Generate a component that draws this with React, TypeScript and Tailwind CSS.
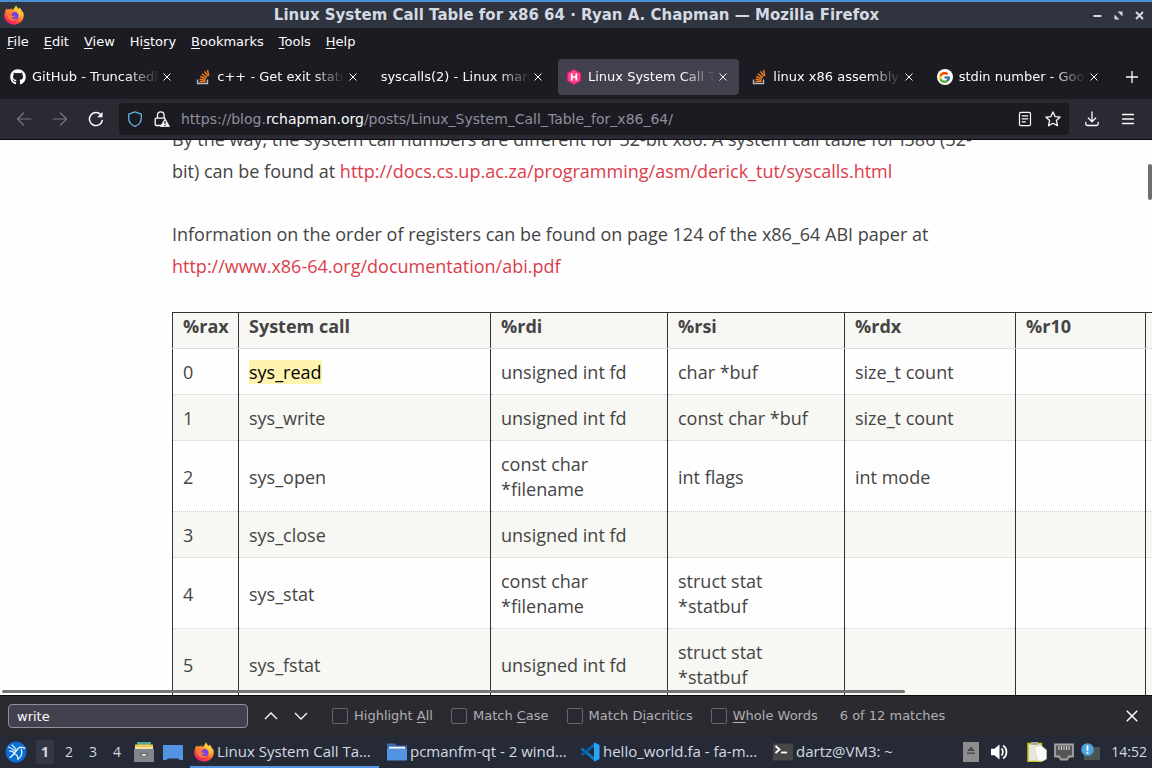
import type { ReactNode } from "react";
import { FaGithub } from "react-icons/fa";
import { FcGoogle } from "react-icons/fc";

const UI_FONT = "font-['DejaVu_Sans',sans-serif]";

function FirefoxIcon({ className }: { className: string }) {
  return (
    <svg viewBox="0 0 20 20" className={className} aria-hidden="true">
      <defs>
        <linearGradient id="ffBody" x1="0.8" y1="0" x2="0.25" y2="1">
          <stop offset="0" stopColor="#fff04a" />
          <stop offset="0.4" stopColor="#ffa52a" />
          <stop offset="0.7" stopColor="#ff4b3e" />
          <stop offset="1" stopColor="#e3127c" />
        </linearGradient>
      </defs>
      <path
        d="M12.2.3c.3 1.8 1.4 2.6 2.6 3.7.5-.2.6-.8.6-1.4 1.6 1.5 2.4 2.8 2.9 4.4.5-.1.5-.5.5-.8.9 1.9 1.1 3.800.9 5.300C19.100 16.200 15 19.700 10 19.700S.5 16 .3 11c-.1-2 .4-3.900 1.200-5.300 0-.9.3-1.800.9-2.500.1.800.3 1.200.7 1.600.9-.5 2.100-.6 3.200-.3C7 3.700 7.900 3.300 8.800 3.300c-1 .8-1.300 1.500-1.300 2 2.300-.1 3-2.800 4.700-5z"
        fill="url(#ffBody)"
      />
      <circle cx="10.300" cy="11" r="4.300" fill="#7542e5" />
      <path
        d="M3 6.200c1.600-1.200 3.400-.9 4.500.1 1.300-.1 2.300.1 3 .8-1 .2-1.800 1-2.500 1.500-.6.500-.9 1.200-.3 1.900.9.900 2.100 0 3.200.4-.6 1.700-2.600 1.900-4 1.500 1.400 1.900 4.200 2 6 .8-1.100 2.300-4.300 3.100-6.700 1.700C3.600 13.400 2.600 9.500 3 6.200z"
        fill="#ff7a35"
      />
      <path d="M12.500 5.500c2.700 1.600 3.400 4.700 2 7.500 2.500-2 2.600-5.500.6-7.600z" fill="#ffd23f" />
    </svg>
  );
}

function StackOverflowIcon() {
  return (
    <svg viewBox="0 0 16 16" className="size-4 shrink-0" fill="none" aria-hidden="true">
      <path d="M2.500 10.500v4h10v-4" stroke="#bcbbbb" strokeWidth="1.400" />
      <g stroke="#f48024" strokeWidth="1.400">
        <path d="M4.500 12.500h6" />
        <path d="m4.600 10.200 6 1.200" />
        <path d="m5.300 7.500 5.600 2.500" />
        <path d="m6.900 4.700 4.800 3.900" />
        <path d="m9.500 2.300 3.400 5" />
        <path d="m12.500 1 1.200 5.800" />
      </g>
    </svg>
  );
}

function HugoIcon() {
  return (
    <svg viewBox="0 0 16 16" className="size-4 shrink-0" aria-hidden="true">
      <path d="M8 .5 14.800 4.200v7.600L8 15.500 1.200 11.800V4.200z" fill="#ff4088" stroke="#c9177e" strokeWidth="1" strokeLinejoin="round" />
      <path d="M5.700 4.500v7M10.300 4.500v7M5.700 8h4.600" stroke="#fff" strokeWidth="1.700" fill="none" />
    </svg>
  );
}

function GoogleIcon() {
  return (
    <span className="flex size-4 shrink-0 items-center justify-center rounded-full bg-white">
      <FcGoogle className="size-[13px]" />
    </span>
  );
}

function CloseIcon({ className = "size-2" }: { className?: string }) {
  return (
    <svg viewBox="0 0 8 8" className={className} stroke="currentColor" fill="none" aria-hidden="true">
      <path d="m.5.500 7 7m0-7-7 7" />
    </svg>
  );
}

type Tab = { title: string; icon?: ReactNode; active?: boolean };

const tabs: Tab[] = [
  { title: "GitHub - Truncated[", icon: <FaGithub className="size-4 shrink-0 text-white" /> },
  { title: "c++ - Get exit status", icon: <StackOverflowIcon /> },
  { title: "syscalls(2) - Linux manual" },
  { title: "Linux System Call Table", icon: <HugoIcon />, active: true },
  { title: "linux x86 assembly -", icon: <StackOverflowIcon /> },
  { title: "stdin number - Google", icon: <GoogleIcon /> },
];

const menus = [
  ["", "F", "ile"],
  ["", "E", "dit"],
  ["", "V", "iew"],
  ["Hi", "s", "tory"],
  ["", "B", "ookmarks"],
  ["", "T", "ools"],
  ["", "H", "elp"],
];

const columns = ["%rax", "System call", "%rdi", "%rsi", "%rdx", "%r10", "%r8"];

const rows = [
  ["0", "sys_read", "unsigned int fd", "char *buf", "size_t count", "", ""],
  ["1", "sys_write", "unsigned int fd", "const char *buf", "size_t count", "", ""],
  ["2", "sys_open", "const char *filename", "int flags", "int mode", "", ""],
  ["3", "sys_close", "unsigned int fd", "", "", "", ""],
  ["4", "sys_stat", "const char *filename", "struct stat *statbuf", "", "", ""],
  ["5", "sys_fstat", "unsigned int fd", "struct stat *statbuf", "", "", ""],
];

const findOptions = [
  { id: "highlight", label: ["Highlight ", "A", "ll"] },
  { id: "case", label: ["Match ", "C", "ase"] },
  { id: "diacritics", label: ["Match D", "i", "acritics"] },
  { id: "words", label: ["", "W", "hole Words"] },
];

function Mnemonic({ parts }: { parts: string[] }) {
  return (
    <>
      {parts[0]}
      <span className="underline underline-offset-2">{parts[1]}</span>
      {parts[2]}
    </>
  );
}

function TitleBar() {
  return (
    <header className="flex h-7 shrink-0 items-center border-t-2 border-[#4a90d9] bg-[#2f343f] px-1">
      <FirefoxIcon className="size-5" />
      <h1 className="flex-1 pl-9 text-center text-[15px] font-bold text-[#d3dae3]">
        Linux System Call Table for x86 64 · Ryan A. Chapman — Mozilla Firefox
      </h1>
      <div className="flex gap-3 pr-1 text-[#d3dae3]">
        <button aria-label="Minimize">
          <svg viewBox="0 0 9 9" className="size-[9px]"><path d="M.5 4h8v2h-8z" fill="currentColor" /></svg>
        </button>
        <button aria-label="Restore">
          <svg viewBox="0 0 9 9" className="size-[9px]"><path d="M3.500.500h5v5zM.5 3.500l5 5h-5z" fill="currentColor" /></svg>
        </button>
        <button aria-label="Close window">
          <svg viewBox="0 0 9 9" className="size-[9px]"><path d="m1 1 7 7m0-7-7 7" stroke="currentColor" strokeWidth="2" /></svg>
        </button>
      </div>
    </header>
  );
}

function TabStrip() {
  return (
    <div className="flex h-11 shrink-0 items-center text-[#fbfbfe]">
      {tabs.map((tab) => (
        <div
          key={tab.title}
          className={`mx-0.5 flex h-9 min-w-0 flex-1 items-center rounded pl-2 pr-3 ${tab.active ? "bg-[#42414d]" : ""}`}
        >
          <button className="flex min-w-0 flex-1 items-center gap-[6px]">
            {tab.icon}
            <span className="flex-1 overflow-hidden whitespace-nowrap text-left [mask-image:linear-gradient(to_left,transparent,black_2rem)]">
              {tab.title}
            </span>
          </button>
          <button aria-label={`Close ${tab.title}`} className="ml-1">
            <CloseIcon />
          </button>
        </div>
      ))}
      <button aria-label="New tab" className="flex w-10 justify-center">
        <svg viewBox="0 0 12 12" className="size-3" stroke="currentColor"><path d="M6 0v12M0 6h12" strokeWidth="1.300" /></svg>
      </button>
    </div>
  );
}

function NavBar() {
  return (
    <nav className="flex h-[41px] shrink-0 items-center border-b border-[#0c0c0f] bg-[#2b2a33] text-[#fbfbfe]">
      <div className="flex w-[119px] items-center gap-5 pl-4">
        <button aria-label="Back" className="text-[#77767e]">
          <svg viewBox="0 0 16 16" className="size-4" fill="none" stroke="currentColor" strokeWidth="1.200" strokeLinecap="round" strokeLinejoin="round">
            <path d="M15 8H1.500m6-6-6 6 6 6" />
          </svg>
        </button>
        <button aria-label="Forward" className="text-[#77767e]">
          <svg viewBox="0 0 16 16" className="size-4" fill="none" stroke="currentColor" strokeWidth="1.200" strokeLinecap="round" strokeLinejoin="round">
            <path d="M1 8h13.500m-6-6 6 6-6 6" />
          </svg>
        </button>
        <button aria-label="Reload">
          <svg viewBox="0 0 16 16" className="size-4" fill="none" stroke="currentColor" strokeWidth="1.500" strokeLinecap="round">
            <path d="M14.300 9.500A6.500 6.500 0 1 1 12.800 3.700" />
            <path d="M14.500 1v5.300H9.200z" fill="currentColor" stroke="none" />
          </svg>
        </button>
      </div>
      <div className="flex h-8 min-w-0 flex-1 items-center rounded bg-[#1c1b22] px-2">
        <svg viewBox="0 0 16 16" className="size-4 shrink-0" fill="none" stroke="#5fb4e0" strokeWidth="1.300" strokeLinejoin="round" aria-hidden="true">
          <path d="M8 .8 14.300 3.100v3.600c0 4.200-2.800 7.300-6.300 8.600-3.500-1.300-6.300-4.400-6.300-8.600V3.100z" />
        </svg>
        <svg viewBox="0 0 16 16" className="ml-[11px] size-4 shrink-0" fill="none" aria-hidden="true">
          <path d="M3.500 7V4.200a3.300 3.300 0 0 1 6.600 0V7M7.500 14.500H2.200a1 1 0 0 1-1-1V8.200a1 1 0 0 1 1-1h8.600" stroke="#fbfbfe" strokeWidth="1.300" strokeLinecap="round" />
          <path d="M11 7.500 15.700 15.700H6.400z" fill="#fbfbfe" stroke="#fbfbfe" strokeWidth=".6" strokeLinejoin="round" />
          <path d="M11 10v3m0 .8V15" stroke="#1c1b22" strokeWidth="1.200" />
        </svg>
        <a href="#top" className="ml-[11px] flex-1 truncate text-sm text-[#8f8f9d]">
          https://blog.<span className="text-[#fbfbfe]">rchapman.org</span>/posts/Linux_System_Call_Table_for_x86_64/
        </a>
        <button aria-label="Reader view">
          <svg viewBox="0 0 16 16" className="size-4" fill="none" stroke="currentColor" strokeWidth="1.200" strokeLinecap="round">
            <rect x="2.500" y="1.300" width="11" height="13.400" rx="1.500" />
            <path d="M5.200 4.800h5.600M5.200 7.800h5.600M5.200 10.800h3.200" />
          </svg>
        </button>
        <button aria-label="Bookmark this page" className="ml-3">
          <svg viewBox="0 0 16 16" className="size-4" fill="none" stroke="currentColor" strokeWidth="1.300" strokeLinejoin="round">
            <path d="m8 .9 2.100 4.700 5.100.5-3.800 3.500 1.100 5.200L8 12.200l-4.500 2.600 1.100-5.200L.8 6.100l5.100-.5z" />
          </svg>
        </button>
      </div>
      <div className="flex w-[83px] items-center gap-5 pl-[15px]">
        <button aria-label="Downloads">
          <svg viewBox="0 0 16 16" className="size-4" fill="none" stroke="currentColor" strokeWidth="1.300" strokeLinecap="round" strokeLinejoin="round">
            <path d="M8 1v9.500M4.300 7 8 10.700 11.700 7M1.800 11.500v1.300a1.700 1.700 0 0 0 1.700 1.700h9a1.700 1.700 0 0 0 1.700-1.700v-1.300" />
          </svg>
        </button>
        <button aria-label="Application menu">
          <svg viewBox="0 0 16 16" className="size-4" fill="none" stroke="currentColor" strokeWidth="1.300" strokeLinecap="round">
            <path d="M2.500 3.500h11M2.500 8h11M2.500 12.500h11" />
          </svg>
        </button>
      </div>
    </nav>
  );
}

function Page() {
  return (
    <main className="relative min-h-0 flex-1 overflow-hidden bg-[#fefefe] font-['Open_Sans','Noto_Sans',sans-serif] text-lg text-[#444]">
      <article className="mx-auto -mt-[17px] max-w-[808px]">
        <p className="mb-[31px] leading-8">
          By the way, the system call numbers are different for 32-bit x86. A system call table for i386 (32-bit) can be
          found at{" "}
          <a href="#syscalls" className="text-[#dc3d4b]">
            http://docs.cs.up.ac.za/programming/asm/derick_tut/syscalls.html
          </a>
        </p>
        <p className="mb-[30px] leading-8">
          Information on the order of registers can be found on page 124 of the x86_64 ABI paper at{" "}
          <a href="#abi" className="text-[#dc3d4b]">
            http://www.x86-64.org/documentation/abi.pdf
          </a>
        </p>
        <table className="w-[1150px] table-fixed border-collapse border border-[#333] text-left leading-[25px]">
          <colgroup>
            <col className="w-[66px]" />
            <col className="w-[252px]" />
            <col className="w-[177px]" />
            <col className="w-[177px]" />
            <col className="w-[171px]" />
            <col className="w-[130px]" />
            <col />
          </colgroup>
          <thead>
            <tr className="bg-[#f7f7f3]">
              {columns.map((name) => (
                <th key={name} className="border-x border-b border-x-[#333] border-b-[#ddd] px-[10px] pb-[9px] pt-px font-bold">
                  {name}
                </th>
              ))}
            </tr>
          </thead>
          <tbody>
            {rows.map((row) => (
              <tr key={row[0]} className="even:bg-[#f7f7f3]">
                {row.map((cell, i) => (
                  <td
                    key={i}
                    className="border-x border-b border-x-[#333] border-b-[#ccc] px-[10px] pb-[9px] pt-[11px] align-middle [border-bottom-style:dotted]"
                  >
                    {cell === "sys_read" ? <mark className="bg-[#fff3b0] text-black">{cell}</mark> : cell}
                  </td>
                ))}
              </tr>
            ))}
          </tbody>
        </table>
      </article>
      {/* Scrollbars sit over the page */}
      <div className="absolute right-0 top-6 h-9 w-1 rounded-full bg-[#6f6f6f]" />
      <div className="absolute bottom-[2px] left-[2px] right-[247px] h-[3px] rounded-full bg-[#757575]" />
    </main>
  );
}

function FindBar() {
  return (
    <form className="flex h-[41px] shrink-0 items-center border-t border-[#0c0c0f] bg-[#2b2a30] pl-2 pr-[14px] text-[#afafb4]">
      <input
        type="text"
        aria-label="Find in page"
        defaultValue="write"
        className="h-6 w-60 rounded border border-[#8f8f9d] bg-[#42414d] px-2 text-[#fbfbfe] outline-none"
      />
      <button type="button" aria-label="Previous match" className="ml-4 text-[#fbfbfe]">
        <svg viewBox="0 0 14 14" className="size-[14px]" fill="none" stroke="currentColor" strokeWidth="1.300"><path d="m1 10 6-6 6 6" /></svg>
      </button>
      <button type="button" aria-label="Next match" className="ml-4 text-[#fbfbfe]">
        <svg viewBox="0 0 14 14" className="size-[14px]" fill="none" stroke="currentColor" strokeWidth="1.300"><path d="m1 4 6 6 6-6" /></svg>
      </button>
      <div className="ml-6 flex items-center gap-[18px]">
        {findOptions.map((option) => (
          <div key={option.id} className="flex items-center gap-[6px]">
            <input
              id={option.id}
              type="checkbox"
              className="size-4 appearance-none rounded-[2px] border border-[#66656f] bg-[#2b2a33]"
            />
            <label htmlFor={option.id}>
              <Mnemonic parts={option.label} />
            </label>
          </div>
        ))}
      </div>
      <span className="ml-[22px] flex-1">6 of 12 matches</span>
      <button type="button" aria-label="Close find bar" className="text-[#fbfbfe]">
        <CloseIcon className="size-3" />
      </button>
    </form>
  );
}

function FolderIcon() {
  return (
    <svg viewBox="0 0 20 20" className="size-5 shrink-0" aria-hidden="true">
      <path d="M0 1.500h7.500l2 2H20v6H0z" fill="#3f6fb5" />
      <path d="M2 4.800h16v4H2z" fill="#fff" />
      <path d="M0 6.500h20V18.500H0z" fill="#5294e2" />
    </svg>
  );
}

function VsCodeIcon() {
  return (
    <svg viewBox="0 0 20 20" className="size-5 shrink-0" aria-hidden="true">
      <path d="m.6 7.200 1.500-1.400 14 10.700-1.500 3z" fill="#0879c4" />
      <path d="m.6 12.800 1.500 1.400 14-10.700-1.500-3z" fill="#0065a9" />
      <path d="M14.500.5 19.500 3v14l-5 2.500c-.3-.3-.5-.6-.5-1V1.500c0-.4.2-.7.500-1z" fill="#29a4f2" />
    </svg>
  );
}

function TerminalIcon() {
  return (
    <svg viewBox="0 0 20 20" className="size-5 shrink-0" aria-hidden="true">
      <path d="M0 1.500h20v17H0z" fill="#474747" />
      <path d="m2.500 4 4 3.500-4 3.500" stroke="#fff" strokeWidth="1.800" fill="none" />
      <path d="M8 10.500h6" stroke="#fff" strokeWidth="1.800" />
    </svg>
  );
}

const tasks = [
  { title: "Linux System Call Table", short: "Linux System Call Ta…", icon: <FirefoxIcon className="size-5 shrink-0" />, active: true },
  { title: "pcmanfm-qt", short: "pcmanfm-qt - 2 wind…", icon: <FolderIcon /> },
  { title: "hello_world.fa", short: "hello_world.fa - fa-m…", icon: <VsCodeIcon /> },
  { title: "dartz@VM3", short: "dartz@VM3: ~", icon: <TerminalIcon /> },
];

function Taskbar() {
  return (
    <footer className="flex h-8 shrink-0 items-center bg-[#262a37] font-['Open_Sans','Noto_Sans',sans-serif] text-sm text-[#d3dae3]">
      <button aria-label="Start menu" className="ml-[5px]">
        <svg viewBox="0 0 22 22" className="size-[22px]">
          <circle cx="11" cy="11" r="10.500" fill="#0a6fd4" />
          <g fill="none" stroke="#e8f3ff" strokeLinecap="round" strokeLinejoin="round">
            <path d="M3.500 6c2.300.6 4.700 2 6.500 4.200M7 4c1.800 1.300 3.400 3.200 4.200 5.300M4.500 9.800c2.200 0 3.900.8 5 2.200" strokeWidth="1.200" />
            <path d="M20 7.200c-2-.2-3.200-1.200-5-.9-2.300.4-2.800 3-4.800 4.900-1.400 1.400-2.600 3.700-5.200 5.300" strokeWidth="1.300" />
            <path d="M16.300 8.500c1.300 3.500.4 7-3.300 9.800M9.500 13.200c2.300.2 3.300 1.700 3.500 5.100" strokeWidth="1.300" />
          </g>
        </svg>
      </button>
      <div className="ml-[9px] flex gap-[6px]">
        {["1", "2", "3", "4"].map((desk) => (
          <button key={desk} className={`h-6 w-[18px] ${desk === "1" ? "bg-[#343845] font-bold" : ""}`}>
            {desk}
          </button>
        ))}
      </div>
      <button aria-label="File manager" className="ml-2">
        <svg viewBox="0 0 20 20" className="size-5">
          <path d="M3 0h14v4H3z" fill="#48a999" />
          <path d="M1 2.500h18v5H1z" fill="#f0c64f" />
          <path d="M1 5h18v3H1z" fill="#f6e3a1" />
          <path d="M0 7h20v13H0z" fill="#80868b" />
          <path d="M6.500 11h7v3h-7z" fill="#5d6266" />
          <path d="M8 12h4v1.500H8z" fill="#fff" />
        </svg>
      </button>
      <button aria-label="Show desktop" className="ml-[9px]">
        <svg viewBox="0 0 20 20" className="size-5">
          <path d="M0 3h20v15h-3l-2-1.500H5L3 18H0z" fill="#5294e2" />
        </svg>
      </button>
      <div className="ml-[7px] flex h-full min-w-0 flex-1 gap-1 text-[15px]">
        {tasks.map((task) => (
          <button
            key={task.title}
            title={task.title}
            className={`flex max-w-[189px] flex-1 items-center gap-[3px] whitespace-nowrap border-b-2 pl-1 pt-0.5 ${
              task.active ? "border-[#5294e2]" : "border-transparent"
            }`}
          >
            {task.icon}
            {task.short}
          </button>
        ))}
      </div>
      <div className="flex items-center pr-[5px]">
        <svg viewBox="0 0 16 20" className="h-5 w-4" aria-hidden="true">
          <path d="M0 0h16v20H0z" fill="#8d8d8d" />
          <path d="m8 4.500 4 4.500H4zM4 10.500h8V12H4z" fill="#4a4a4a" />
        </svg>
        <svg viewBox="0 0 18 16" className="ml-3 h-4 w-[18px]" fill="none" stroke="#fff" strokeWidth="1.800" aria-hidden="true">
          <path d="M0 4.800h3.500L8.500.5v15l-5-4.300H0z" fill="#fff" stroke="none" />
          <path d="M10.500 4.500c1.800 1.600 1.800 5.400 0 7M12 1.500c4.600 3 4.600 10 0 13" />
        </svg>
        <svg viewBox="0 0 20 20" className="ml-[18px] size-5" aria-hidden="true">
          <path d="M1 1.500h13.500v18H1z" fill="#e8e6d8" stroke="#c8c21e" strokeWidth="1.500" />
          <path d="M4 0h7v3H4z" fill="#aaa99c" />
          <path d="m7 5 7-1.500 5.500 4.500v9L16 19H11z" fill="#fafaf5" stroke="#c9c9bd" strokeWidth=".6" />
        </svg>
        <svg viewBox="0 0 20 18" className="ml-[7px] h-[18px] w-5" aria-hidden="true">
          <path d="M1 1.500h18v12h-4l-2 3H7l-2-3H1z" fill="#555" stroke="#a5a5a5" strokeWidth="1.800" />
          <path d="M5 3v4M7.500 3v4M10 3v4M12.500 3v4M15 3v4" stroke="#ddd" />
        </svg>
        <svg viewBox="0 0 20 18" className="ml-[7px] h-[18px] w-5" aria-hidden="true">
          <path d="M3 4h16v13H3z" fill="#4b5450" />
          <circle cx="6.500" cy="6.500" r="6.300" fill="#4aa3e0" />
          <path d="M6.500 2.500V8m0 1v1.800" stroke="#fff" strokeWidth="1.800" />
        </svg>
        <time className="ml-[10px]">14:52</time>
      </div>
    </footer>
  );
}

export default function App() {
  return (
    <div className={`flex h-screen flex-col overflow-hidden bg-[#1c1b22] text-[13px] leading-5 ${UI_FONT}`}>
      <TitleBar />
      <div className="flex h-[27px] shrink-0 items-center gap-[15px] pl-[7px] text-[#fbfbfe]">
        {menus.map((menu) => (
          <button key={menu.join("")}>
            <Mnemonic parts={menu} />
          </button>
        ))}
      </div>
      <TabStrip />
      <NavBar />
      <Page />
      <FindBar />
      <Taskbar />
    </div>
  );
}
